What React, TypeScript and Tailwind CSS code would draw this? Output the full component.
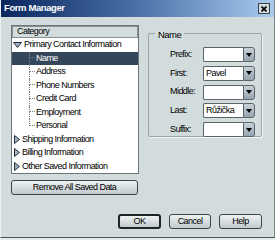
import React from 'react';

const children = ['Name', 'Address', 'Phone Numbers', 'Credit Card', 'Employment', 'Personal'];
const collapsed = ['Shipping Information', 'Billing Information', 'Other Saved Information'];
const fields: { label: string; value: string }[] = [
  { label: 'Prefix:', value: '' },
  { label: 'First:', value: 'Pavel' },
  { label: 'Middle:', value: '' },
  { label: 'Last:', value: 'Růžička' },
  { label: 'Suffix:', value: '' },
];

const Tri: React.FC<{ open?: boolean }> = ({ open }) =>
  open ? (
    <svg width="9" height="6" viewBox="0 0 9 6">
      <polygon points="0.5,0.5 8.5,0.5 4.5,5.5" fill="#9fb0c2" stroke="#26303a" strokeWidth="1" />
    </svg>
  ) : (
    <svg width="6" height="9" viewBox="0 0 6 9">
      <polygon points="0.5,0.5 5.5,4.5 0.5,8.5" fill="#9fb0c2" stroke="#26303a" strokeWidth="1" />
    </svg>
  );

const Combo: React.FC<{ value: string }> = ({ value }) => (
  <div className="flex h-[15px] w-[52px]">
    <div className="flex flex-1 items-center bg-white border border-[#5c646a] border-r-0 rounded-l-[2px] pl-[2px] text-black">
      {value}
    </div>
    <div className="flex w-[12px] items-center justify-center border border-[#5c646a] rounded-r-[3px] bg-gradient-to-b from-[#c8d2da] to-[#96a4b0]">
      <svg width="6" height="4" viewBox="0 0 6 4">
        <polygon points="0,0 6,0 3,4" fill="#000" />
      </svg>
    </div>
  </div>
);

const Btn: React.FC<{ label: string; w: string; main?: boolean }> = ({ label, w, main }) => (
  <button
    className={
      'flex h-[15px] items-center justify-center rounded-[3px] bg-gradient-to-b from-[#eef2f2] to-[#c2cacf] text-black ' +
      w +
      (main ? ' border-2 border-[#1e2428]' : ' border border-[#3c444a]')
    }
  >
    {label}
  </button>
);

export default function App() {
  return (
    <div className="w-[275px] h-[240px] bg-[#e6eaea]">
      <div
        className="w-[275px] h-[238px] bg-[#d3dcdc] border-l border-l-[#eef2f2] border-r border-r-[#7c8488] border-b border-b-[#4c5458] text-[9px] tracking-[-0.55px] text-black"
        style={{ fontFamily: '"Liberation Sans", Arial, sans-serif' }}
      >
        {/* title bar */}
        <div className="flex h-[17px] items-center justify-between pl-[3px] pr-[4px] bg-gradient-to-r from-[#0a275e] via-[#4a72a8] to-[#aacbee]">
          <span className="text-[9.5px] font-bold text-white tracking-[-0.4px]">Form Manager</span>
          <div className="flex h-[11px] w-[12px] items-center justify-center border border-[#3a4248] bg-[#d3dcdc]">
            <svg width="6" height="6" viewBox="0 0 6 6">
              <path d="M0.5 0.5 L5.5 5.5 M5.5 0.5 L0.5 5.5" stroke="#000" strokeWidth="1.6" />
            </svg>
          </div>
        </div>

        <div className="flex">
          {/* left column */}
          <div className="flex w-[138px] flex-col pl-[10px] pt-[8px]">
            <div className="flex h-[149px] flex-col border border-[#6e767c] bg-white">
              <div className="flex h-[12px] items-center border border-[#8a9296] bg-[#d3dcdc] pl-[4px]">Category</div>
              <div className="flex h-[13.5px] items-center gap-[2px] pl-[1px]">
                <Tri open />
                <span>Primary Contact Information</span>
              </div>
              {children.map((c, i) => {
                const sel = i === 0;
                const last = i === children.length - 1;
                return (
                  <div
                    key={c}
                    className={'flex h-[13.5px] items-stretch ' + (sel ? 'bg-[#34465a] text-white' : '')}
                  >
                    <div className="w-[17px]" />
                    <div className="flex w-[6px] flex-col">
                      <div className="h-1/2 border-l border-b border-dotted border-[#7a7a7a]" />
                      <div className={'h-1/2 ' + (last ? '' : 'border-l border-dotted border-[#7a7a7a]')} />
                    </div>
                    <span className="flex items-center pl-[1px]">{c}</span>
                  </div>
                );
              })}
              {collapsed.map((c) => (
                <div key={c} className="flex h-[13.5px] items-center gap-[2px] pl-[2px]">
                  <Tri />
                  <span>{c}</span>
                </div>
              ))}
            </div>
            <div className="mt-[6px]">
              <Btn label="Remove All Saved Data" w="w-[127px]" />
            </div>
          </div>

          {/* right group */}
          <div className="relative ml-[9px] mt-[16px] h-[104px] w-[114px] rounded-[2px] border border-[#9aa4a8] shadow-[1px_1px_0_#f2f6f6] pl-[21px] pt-[13px]">
            <span className="absolute left-[6px] top-[-6px] bg-[#d3dcdc] px-[3px] text-[9.5px]">Name</span>
            <div className="flex flex-col gap-[3.8px]">
              {fields.map((f) => (
                <div key={f.label} className="flex h-[15px] items-center">
                  <span className="w-[33px]">{f.label}</span>
                  <Combo value={f.value} />
                </div>
              ))}
            </div>
          </div>
        </div>

        {/* dialog buttons */}
        <div className="mt-[19px] flex justify-end gap-[8px] pr-[12px]">
          <Btn label="OK" w="w-[43px]" main />
          <Btn label="Cancel" w="w-[42px]" />
          <Btn label="Help" w="w-[43px]" />
        </div>
      </div>
    </div>
  );
}
